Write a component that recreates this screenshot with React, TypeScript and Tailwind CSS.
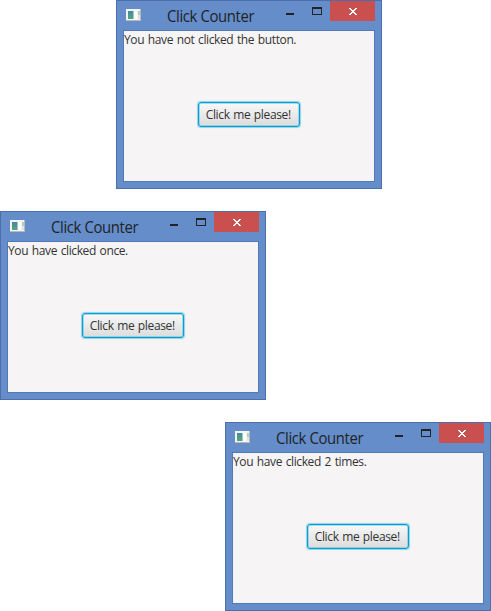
type WindowProps = { message: string; align: string };

function AppIcon() {
  return (
    <svg width="17" height="14" viewBox="0 0 17 14" shapeRendering="crispEdges">
      <defs>
        <linearGradient id="pane" x1="0" y1="0" x2="0" y2="1">
          <stop offset="0" stopColor="#4a86a4" />
          <stop offset="1" stopColor="#52a97c" />
        </linearGradient>
      </defs>
      <rect x="1" y="1" width="15" height="12" fill="#b9b9bd" />
      <rect x="1" y="1" width="14" height="11" fill="#f4f3f2" />
      <rect x="3" y="3" width="5" height="8" fill="url(#pane)" />
      <rect x="8" y="3" width="1" height="8" fill="#9cc9bb" />
      <rect x="9" y="3" width="3" height="8" fill="#ffffff" />
      <rect x="13" y="3" width="2" height="4" fill="#a9d3bf" />
      <rect x="13" y="7" width="2" height="4" fill="#e2e2e4" />
    </svg>
  );
}

function TitleBar() {
  return (
    <div className="flex h-[29px] items-start">
      <div className="mt-[7px] ml-2 h-3.5 w-[17px]">
        <AppIcon />
      </div>
      <div className="mt-[5px] ml-[25px] h-5 w-[110px] origin-left scale-x-[0.93] whitespace-nowrap text-[16px] leading-5 tracking-[-0.4px] text-[#222326]">
        Click Counter
      </div>
      <div className="mt-3 ml-[9px] h-0.5 w-2 bg-[#222326]" />
      <div className="mt-1.5 ml-[18px] h-2 w-2.5 border border-t-2 border-[#222326]" />
      <div className="ml-2 flex h-5 w-[45px] items-center justify-center bg-[#c9504f]">
        <svg width="8" height="7" viewBox="0 0 8 7" shapeRendering="crispEdges" fill="#ffffff">
          <path d="M0 0h2v1h1v1h2V1h1V0h2v1H7v1H6v1H5v1h1v1h1v1h1v1H6V6H5V5H3v1H2v1H0V6h1V5h1V4h1V3H2V2H1V1H0z" />
        </svg>
      </div>
    </div>
  );
}

function CounterWindow({ message, align }: WindowProps) {
  return (
    <section className={`h-[189px] w-[266px] border border-[#4a6fab] bg-[#648dc9] ${align}`}>
      <TitleBar />
      <div className="mx-1.5 flex h-[152px] w-[252px] flex-col border border-[#4f79b8] bg-[#f6f4f5]">
        <p className="h-[18px] whitespace-nowrap text-[12px] leading-[17px] tracking-[-0.38px] [word-spacing:0.9px] text-[#333333]">
          {message}
        </p>
        <button className="mt-[53px] ml-[74px] h-[25px] w-[102px] rounded-[3px] border border-[#039ed3] bg-linear-to-b from-[#f8f8f8] to-[#dcdcdc] pr-[1.5px] text-[12px] leading-[23px] tracking-[-0.36px] [word-spacing:0.8px] whitespace-nowrap text-[#333333] shadow-[0_0_1px_1px_#8fd3ea,inset_0_0_0_0.5px_#58bede]">
          Click me please!
        </button>
      </div>
    </section>
  );
}

export default function App() {
  return (
    <main className="flex h-[611px] w-[491px] flex-col gap-[22px] bg-white font-['Open_Sans','Noto_Sans',sans-serif]">
      <CounterWindow message="You have not clicked the button." align="ml-[116px]" />
      <CounterWindow message="You have clicked once." align="ml-0" />
      <CounterWindow message="You have clicked 2 times." align="ml-[225px]" />
    </main>
  );
}
